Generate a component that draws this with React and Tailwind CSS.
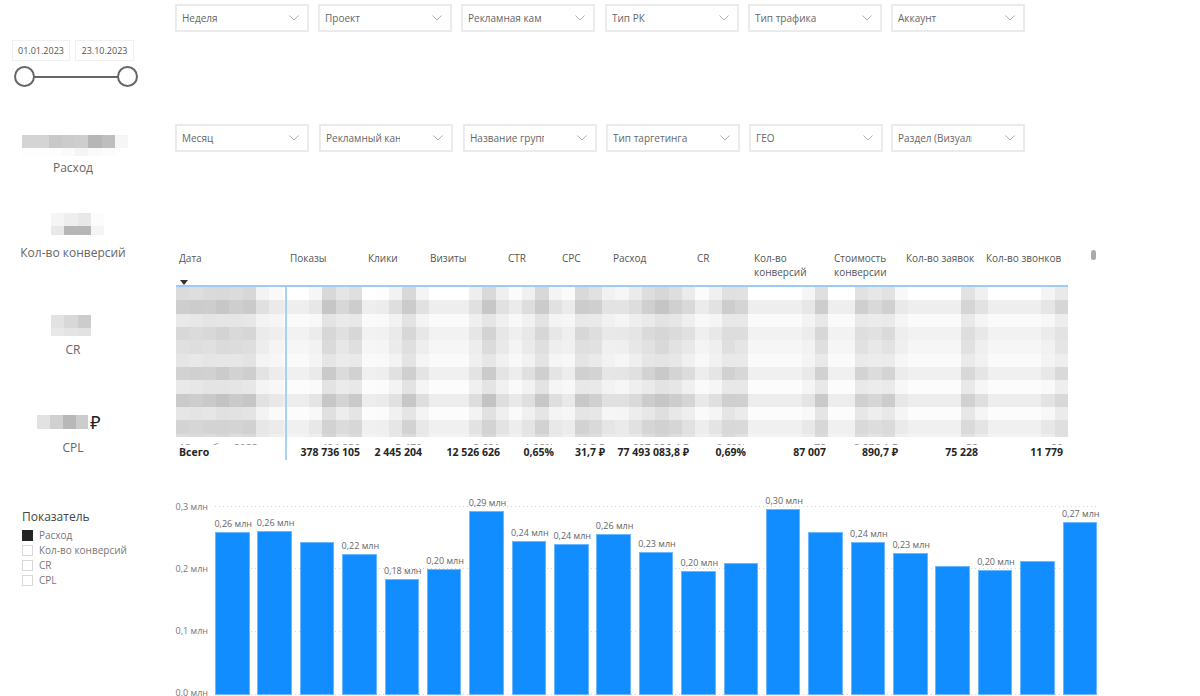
import React from "react";

const row1 = [
  { label: "Неделя", ml: "ml-0" },
  { label: "Проект", ml: "ml-[9px]" },
  { label: "Рекламная кампания", ml: "ml-[9px]" },
  { label: "Тип РК", ml: "ml-[10px]" },
  { label: "Тип трафика", ml: "ml-[9px]" },
  { label: "Аккаунт", ml: "ml-[9px]" },
];

const row2 = [
  { label: "Месяц", ml: "ml-0" },
  { label: "Рекламный канал", ml: "ml-[10px]" },
  { label: "Название группы", ml: "ml-[10px]" },
  { label: "Тип таргетинга", ml: "ml-[9px]" },
  { label: "ГЕО", ml: "ml-[9px]" },
  { label: "Раздел (Визуализация)", ml: "ml-[8px]" },
];

const gridCols =
  "grid grid-cols-[109px_80px_62px_78px_54px_51px_84px_57px_80px_72px_80px_85px]";

const headers = [
  "Дата",
  "Показы",
  "Клики",
  "Визиты",
  "CTR",
  "CPC",
  "Расход",
  "CR",
  "Кол-во конверсий",
  "Стоимость конверсии",
  "Кол-во заявок",
  "Кол-во звонков",
];

const clippedRow = ["13 ноября 2023", "424 856", "5 470", "2 621", "1,28%", "46,5 ₽", "227 226,4 ₽", "0,69%", "78", "2 876,1 ₽", "52", "20"];
const totals = ["Всего", "378 736 105", "2 445 204", "12 526 626", "0,65%", "31,7 ₽", "77 493 083,8 ₽", "0,69%", "87 007", "890,7 ₽", "75 228", "11 779"];

// darkness of each mosaic column of the blurred table body
const profile = [
  38, 38, 40, 45, 40, 42, 14, 6, 0, 0, 8, 45, 28, 38, 0, 2, 16, 42, 14, 0, 0, 0, 18, 45, 18, 4, 18, 42, 14, 6, 40, 34,
  14, 12, 22, 36, 46, 36, 24, 4, 14, 36, 32, 0, 0, 0, 0, 10, 38, 0, 0, 34, 26, 34, 8, 0, 0, 0, 0, 32, 14, 0, 0, 0, 0,
  10, 26,
];
const rowBase = [0, 17, 5, 13, 9, 5, 15, 3, 18, 3, 15, 12];
const rowMul = [0.9, 0.85, 0.5, 0.65, 0.6, 0.5, 0.8, 0.55, 0.9, 0.6, 0.7, 0.6];

const bars = [
  { top: 531, label: "0,26 млн" },
  { top: 530, label: "0,26 млн" },
  { top: 541.5 },
  { top: 553, label: "0,22 млн" },
  { top: 578.5, label: "0,18 млн" },
  { top: 568, label: "0,20 млн" },
  { top: 510, label: "0,29 млн" },
  { top: 540.5, label: "0,24 млн" },
  { top: 543, label: "0,24 млн" },
  { top: 533, label: "0,26 млн" },
  { top: 551, label: "0,23 млн" },
  { top: 570, label: "0,20 млн" },
  { top: 562 },
  { top: 508, label: "0,30 млн" },
  { top: 531 },
  { top: 541.5, label: "0,24 млн" },
  { top: 552, label: "0,23 млн" },
  { top: 565 },
  { top: 569.5, label: "0,20 млн" },
  { top: 560.5 },
  { top: 521.5, label: "0,27 млн" },
];

const dots = "h-px bg-[repeating-linear-gradient(90deg,#d4d4d4_0_1px,transparent_1px_4px)]";

function Slicer({ label, ml }) {
  return (
    <div className={`${ml} w-[134px] h-[28px] shrink-0 border-2 border-[#ebebeb] flex items-center justify-between pl-[5px] pr-[8px]`}>
      <span className="w-[74px] overflow-hidden whitespace-nowrap text-[10px] text-[#666666]">{label}</span>
      <svg width="10" height="6" viewBox="0 0 10 6" fill="none" stroke="#a8a8a8" strokeWidth="0.9">
        <path d="M0.5 0.5L5 5l4.5-4.5" />
      </svg>
    </div>
  );
}

function Blur({ cells, className }) {
  return (
    <div className={`grid ${className}`}>
      {cells.map((c, i) => (
        <div key={i} style={{ backgroundColor: `rgb(${c},${c},${c})` }} />
      ))}
    </div>
  );
}

function Kpi({ children, label, className }) {
  return (
    <div className={`w-[146px] flex flex-col items-center ${className}`}>
      {children}
      <div className="text-[12px] leading-[18px] text-[#666666] whitespace-nowrap">{label}</div>
    </div>
  );
}

function LegendItem({ label, checked }) {
  return (
    <div className="flex items-center h-[15px] text-[10px] text-[#777777]">
      <span className={`w-[11px] h-[11px] mr-[6px] border ${checked ? "bg-[#252525] border-[#252525]" : "border-[#d8d8d8]"}`} />
      {label}
    </div>
  );
}

function Bar({ top, label }) {
  return (
    <div className="relative w-[34.5px] bg-[#118DFF] border border-[#6cb8ff]" style={{ height: 694 - top }}>
      {label && (
        <span className="absolute left-[calc(50%+1px)] -translate-x-1/2 top-[-16px] text-[9px] leading-[14px] text-[#666666] whitespace-nowrap">
          {label}
        </span>
      )}
    </div>
  );
}

export default function App() {
  return (
    <div className="w-[1200px] h-[696px] overflow-hidden flex bg-white font-['Open_Sans','Noto_Sans',sans-serif]">
      <aside className="w-[175px] shrink-0 flex flex-col pt-[40px]">
        <div className="flex pl-[12px] gap-[5px]">
          <div className="w-[58px] h-[21px] border border-[#f0f0f0] flex items-center justify-center text-[9px] text-[#555555]">01.01.2023</div>
          <div className="w-[59px] h-[21px] border border-[#f0f0f0] flex items-center justify-center text-[9px] text-[#555555]">23.10.2023</div>
        </div>
        <div className="relative ml-[14px] mt-[5px] w-[124px] h-[21px] flex items-center justify-between">
          <div className="absolute left-[10px] right-[10px] top-[9.5px] h-[2px] bg-[#666666]" />
          <div className="relative w-[21px] h-[21px] rounded-full border-2 border-[#666666] bg-white" />
          <div className="relative w-[21px] h-[21px] rounded-full border-2 border-[#666666] bg-white" />
        </div>

        <Kpi label="Расход" className="mt-[48px]">
          <Blur
            className="grid-cols-[repeat(8,1fr)] grid-rows-[13px_8px] w-[106px] h-[21px] self-start ml-[22px] mb-[3px]"
            cells={[212, 212, 200, 204, 206, 182, 190, 246, 253, 253, 253, 250, 244, 250, 252, 255]}
          />
        </Kpi>
        <Kpi label="Кол-во конверсий" className="mt-[36px]">
          <Blur
            className="grid-cols-[repeat(4,1fr)] grid-rows-[13px_9px] w-[53px] h-[22px] self-start ml-[51px] mb-[9px]"
            cells={[245, 238, 232, 252, 232, 182, 182, 244]}
          />
        </Kpi>
        <Kpi label="CR" className="mt-[53px]">
          <Blur
            className="grid-cols-[repeat(3,1fr)] grid-rows-[13px_8px] w-[40px] h-[21px] self-start ml-[51px] mb-[5px]"
            cells={[226, 216, 204, 232, 228, 226]}
          />
        </Kpi>
        <Kpi label="CPL" className="mt-[52px]">
          <div className="flex items-center h-[22px] mr-[8px] mb-[6px]">
            <Blur
              className="grid-cols-[repeat(4,1fr)] grid-rows-[14px] w-[51px] h-[14px]"
              cells={[226, 208, 184, 204]}
            />
            <span className="ml-[2px] text-[18px] leading-[22px] text-[#222222]">₽</span>
          </div>
        </Kpi>

        <div className="ml-[22px] mt-[51px]">
          <div className="h-[20px] text-[12px] leading-[18px] text-[#444444]">Показатель</div>
          <LegendItem label="Расход" checked />
          <LegendItem label="Кол-во конверсий" />
          <LegendItem label="CR" />
          <LegendItem label="CPL" />
        </div>
      </aside>

      <main className="flex-1 flex flex-col pt-[4px]">
        <div className="flex">
          {row1.map((s) => (
            <Slicer key={s.label} {...s} />
          ))}
        </div>
        <div className="flex mt-[92px]">
          {row2.map((s) => (
            <Slicer key={s.label} {...s} />
          ))}
        </div>

        <div className="flex mt-[99px] ml-[1px]">
          <div className="w-[892px] shrink-0">
            <div className={`${gridCols} h-[36px] border-b-2 border-[#9ccbf7] relative`}>
              {headers.map((h, i) => (
                <div key={h} className={`text-[10px] leading-[14px] text-[#555555] ${i === 1 ? "pl-[5px]" : "pl-[3px]"}`}>{h}</div>
              ))}
              <svg className="absolute left-[4px] top-[29px]" width="8" height="5" viewBox="0 0 8 5" fill="#333333">
                <path d="M0 0h8L4 5z" />
              </svg>
            </div>
            <div className="relative">
              <div className="grid grid-cols-[repeat(67,1fr)] grid-rows-[repeat(12,13.33px)] h-[150px] overflow-hidden">
                {rowBase.flatMap((base, r) =>
                  profile.map((d, c) => {
                    const wobble = ((r * 7 + c * 13) % 5) - 2;
                    const v = Math.round(255 - base - d * rowMul[r] + (d > 5 ? wobble : 0));
                    return <div key={`${r}-${c}`} style={{ backgroundColor: `rgb(${v},${v},${v})` }} />;
                  })
                )}
              </div>
              <div className={`${gridCols} h-[8px] overflow-hidden`}>
                {clippedRow.map((v, i) => (
                  <div key={i} className={`pt-[4px] px-[5px] text-[10.5px] leading-[14px] text-[#888888] whitespace-nowrap ${i === 0 ? "text-left pl-[3px]" : "text-right"}`}>{v}</div>
                ))}
              </div>
              <div className={`${gridCols} h-[15px]`}>
                {totals.map((v, i) => (
                  <div key={i} className={`px-[5px] text-[10.5px] leading-[15px] font-bold text-[#252525] whitespace-nowrap ${i === 0 ? "text-left pl-[3px]" : "text-right"}`}>{v}</div>
                ))}
              </div>
              <div className="absolute left-[109px] top-0 bottom-0 w-[2px] bg-[#a6d2fa]" />
            </div>
          </div>
          <div className="ml-[23px] mt-[-1px] w-[5px] h-[10px] rounded-full bg-[#aaaaaa]" />
        </div>

        <div className="flex mt-[39.5px]">
          <div className="w-[35px] h-[201px] shrink-0 ml-[-2px] flex flex-col justify-between items-end text-[9px] leading-[14px] text-[#777777] whitespace-nowrap">
            <span>0,3 млн</span>
            <span>0,2 млн</span>
            <span>0,1 млн</span>
            <span>0,0 млн</span>
          </div>
          <div className="relative ml-[7px] w-[882px] h-[188.5px] mt-[6.5px]">
            <div className={`absolute inset-x-0 top-0 ${dots}`} />
            <div className={`absolute inset-x-0 top-[62px] ${dots}`} />
            <div className={`absolute inset-x-0 top-[125px] ${dots}`} />
            <div className={`absolute inset-x-0 bottom-0 ${dots}`} />
            <div className="absolute inset-x-0 bottom-0 flex items-end justify-between">
              {bars.map((b, i) => (
                <Bar key={i} {...b} />
              ))}
            </div>
          </div>
        </div>
      </main>
    </div>
  );
}
